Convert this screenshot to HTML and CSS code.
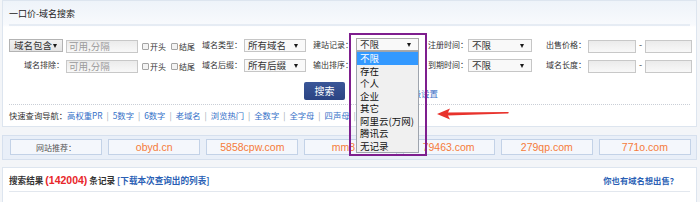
FILE: index.html
```html
<!DOCTYPE html>
<html lang="zh">
<head>
<meta charset="utf-8">
<title>一口价-域名搜索</title>
<link rel="stylesheet" href="styles.css">
</head>
<body>
<div class="page">
  <div class="panel search">
    <div class="ph">一口价-域名搜索</div>
    <div class="form">
      <div class="row">
        <div class="cellA"><span class="sel sel-first w54"><span>域名包含</span><i class="ar"></i></span></div>
        <span class="inp w72">可用,分隔</span>
        <span class="chk"><i class="cb"></i><span>开头</span></span>
        <span class="chk last"><i class="cb"></i><span>结尾</span></span>
        <span class="lbl w42">域名类型：</span>
        <span class="sel w62 mr7"><span>所有域名</span><i class="ar"></i></span>
        <span class="lbl w43">建站记录：</span>
        <span class="sel w63 mr9 open"><span>不限</span><i class="ar"></i></span>
        <span class="lbl w40">注册时间：</span>
        <span class="sel w64 mr14"><span>不限</span><i class="ar"></i></span>
        <span class="lbl w42">出售价格：</span>
        <span class="inp w48"></span>
        <span class="dash">-</span>
        <span class="inp w47"></span>
      </div>
      <div class="row">
        <div class="cellA"><span class="lbl right">域名排除：</span></div>
        <span class="inp w72">可用,分隔</span>
        <span class="chk"><i class="cb"></i><span>开头</span></span>
        <span class="chk last"><i class="cb"></i><span>结尾</span></span>
        <span class="lbl w42">域名后缀：</span>
        <span class="sel w62 mr7"><span>所有后缀</span><i class="ar"></i></span>
        <span class="lbl w43">输出排序：</span>
        <span class="sel w63 mr9"><span></span><i class="ar"></i></span>
        <span class="lbl w40">到期时间：</span>
        <span class="sel w64 mr14"><span>不限</span><i class="ar"></i></span>
        <span class="lbl w42">域名长度：</span>
        <span class="inp w48"></span>
        <span class="dash">-</span>
        <span class="inp w47"></span>
      </div>
      <div class="btnrow">
        <span class="btn">搜索</span>
        <a class="reset">高级设置</a>
      </div>
    </div>
    <div class="nav">
      <span class="navlabel">快速查询导航：</span><a>高权重PR</a><i>|</i><a>5数字</a><i>|</i><a>6数字</a><i>|</i><a>老域名</a><i>|</i><a>浏览热门</a><i>|</i><a>全数字</a><i>|</i><a>全字母</a><i>|</i><a>四声母</a><i>|</i>
    </div>
  </div>

  <div class="panel rec">
    <span class="box title">网站推荐：</span>
    <span class="box">obyd.cn</span>
    <span class="box">5858cpw.com</span>
    <span class="box">mm8.cn</span>
    <span class="box">79463.com</span>
    <span class="box">279qp.com</span>
    <span class="box">771o.com</span>
  </div>

  <div class="panel result">
    <div class="resrow">
      <span class="restext">搜索结果 <b class="num">(142004)</b> 条记录 <a class="dl">[下载本次查询出的列表]</a></span>
      <a class="sell">你也有域名想出售？</a>
    </div>
  </div>

  <div class="frame"></div>
  <ul class="dropdown">
    <li class="hl">不限</li>
    <li>存在</li>
    <li>个人</li>
    <li>企业</li>
    <li>其它</li>
    <li>阿里云(万网)</li>
    <li>腾讯云</li>
    <li>无记录</li>
  </ul>
  <svg class="arrow" width="74" height="14" viewBox="0 0 74 14">
    <polygon points="1,7 14,1.5 12,5.6 72,5 73,5.8 72,6.6 12,8.4 14,12.5" fill="#e8322c"/>
  </svg>
</div>
</body>
</html>
```

FILE: styles.css
```css
html, body {
  margin: 0;
  padding: 0;
  background: #f3f5f8;
}

.page {
  position: relative;
  width: 700px;
  height: 202px;
  overflow: hidden;
  box-sizing: border-box;
  padding: 0 3px 0 2px;
  font-family: "Noto Sans CJK SC", "Noto Sans", sans-serif;
  color: #333;
}

a { text-decoration: none; cursor: pointer; }

.panel {
  border: 1px solid #dde5ef;
  background: #fff;
}

/* ---------- search panel ---------- */
.search {
  padding: 0 4px 0 6px;
  background: linear-gradient(#eef3f9 0, #f8fafd 24px, #fff 26px, #fff 100%);
}

.ph {
  height: 20px;
  padding-top: 3px;
  line-height: 20px;
  font-size: 9px;
  color: #222;
  border-bottom: 2px solid #e6ecf4;
  margin-right: 2px;
}

.form {
  padding-top: 9px;
  border-bottom: 1px dotted #c9ced6;
  margin-right: 2px;
}

.row {
  display: flex;
  align-items: flex-start;
  height: 20px;
}

.cellA {
  width: 57px;
  flex: none;
}

.lbl {
  flex: none;
  display: block;
  font-size: 8px;
  line-height: 20px;
  color: #333;
  white-space: nowrap;
}
.lbl.right { text-align: right; padding-right: 2px; }

.w40 { width: 40px; }
.w42 { width: 42px; }
.w43 { width: 43px; }
.w47 { width: 47px; }
.w48 { width: 48px; }
.w54 { width: 54px; }
.w62 { width: 62px; }
.w63 { width: 63px; }
.w64 { width: 64px; }
.w72 { width: 72px; }
.mr7 { margin-right: 7px; }
.mr9 { margin-right: 9px; }
.mr14 { margin-right: 14px; }

.sel {
  flex: none;
  display: flex;
  align-items: center;
  justify-content: space-between;
  box-sizing: border-box;
  height: 13px;
  margin-top: 4px;
  padding: 0 7px 0 3px;
  border: 1px solid #c6c6c6;
  background: #f9f9f9;
  font-size: 9.5px;
  line-height: 11px;
  color: #333;
  white-space: nowrap;
}
.sel-first {
  padding: 0 5px 0 4px;
  border-color: #b3b3b3;
  background: linear-gradient(#f1f1f1, #e4e4e4);
}
.sel.open { border-color: #a9a9a9; margin-top: 3px; }

.ar {
  display: block;
  width: 0;
  height: 0;
  border-left: 2.5px solid transparent;
  border-right: 2.5px solid transparent;
  border-top: 4px solid #1a1a1a;
}

.inp {
  flex: none;
  display: block;
  box-sizing: border-box;
  height: 13px;
  margin-top: 5px;
  padding-left: 2px;
  border: 1px solid #c8c8c8;
  background: linear-gradient(#ebebeb, #f8f8f8);
  font-size: 9.5px;
  line-height: 11px;
  color: #9a9a9a;
  white-space: nowrap;
}
.search .row .inp.w72 { margin-right: 4px; }

.chk {
  flex: none;
  display: flex;
  align-items: center;
  height: 20px;
  font-size: 8px;
  color: #333;
  margin-right: 5px;
  margin-top: 1px;
}
.chk.last { margin-right: 7px; }
.cb {
  display: block;
  box-sizing: border-box;
  width: 7px;
  height: 7px;
  margin-right: 1px;
  border: 1px solid #a4a4a4;
  border-radius: 1px;
  background: #f3f3f3;
}

.dash {
  flex: none;
  width: 9px;
  text-align: center;
  font-size: 9px;
  line-height: 20px;
  color: #444;
}

.btnrow {
  display: flex;
  align-items: flex-start;
  height: 29px;
  padding-left: 295px;
}
.btn {
  margin-top: 7px;
  width: 41px;
  height: 18px;
  line-height: 18px;
  text-align: center;
  font-size: 10px;
  color: #fff;
  background: linear-gradient(#3a5698, #2b4483);
  border-radius: 2px;
}
.reset {
  margin-top: 12px;
  margin-left: 59px;
  font-size: 8.5px;
  line-height: 12px;
  color: #3a70c6;
}

.nav {
  height: 21px;
  line-height: 21px;
  font-size: 8.3px;
  white-space: nowrap;
}
.navlabel { color: #333; }
.nav a { color: #3470c8; }
.nav i {
  font-style: normal;
  color: #9aa3b0;
  margin: 0 4px;
}

/* ---------- recommend ---------- */
.rec {
  margin-top: 8px;
  display: flex;
  gap: 6px;
  padding: 3px 5px 4px 7px;
  background: #e9eff8;
  border-color: #d6e0ee;
}
.box {
  flex: 1;
  height: 16px;
  box-sizing: border-box;
  border: 1px solid #c3d2e7;
  background: #f4f7fc;
  display: flex;
  align-items: center;
  justify-content: center;
  font-family: "Liberation Sans", Arial, sans-serif;
  font-size: 10.5px;
  color: #f47b3a;
  white-space: nowrap;
  overflow: hidden;
}
.box.title {
  font-family: "Noto Sans CJK SC", sans-serif;
  font-size: 8px;
  color: #555;
}

/* ---------- result ---------- */
.result {
  margin-top: 7px;
  height: 40px;
  padding: 0 4px 0 6px;
}
.resrow {
  display: flex;
  justify-content: space-between;
  align-items: center;
  height: 23px;
  border-bottom: 1px solid #e2e7ee;
  margin-right: 2px;
  font-size: 8.6px;
  font-weight: bold;
  white-space: nowrap;
}
.restext { color: #333; }
.num {
  font-family: "Liberation Sans", Arial, sans-serif;
  font-size: 10.5px;
  color: #e8262a;
}
.dl { color: #2a5fb5; }
.sell { color: #2a5fb5; margin-right: 12px; font-size: 8.3px; }

/* ---------- overlays ---------- */
.frame {
  position: absolute;
  left: 349px;
  top: 33px;
  width: 78px;
  height: 123px;
  box-sizing: border-box;
  border: 2px solid #7e1e8e;
}

.dropdown {
  position: absolute;
  left: 356px;
  top: 51px;
  width: 63px;
  height: 102px;
  box-sizing: border-box;
  margin: 0;
  padding: 0;
  list-style: none;
  border: 1px solid #9ea4ad;
  background: #f0f0f0;
}
.dropdown li {
  height: 12.5px;
  line-height: 12.5px;
  padding-left: 3px;
  font-size: 9.5px;
  color: #111;
  white-space: nowrap;
}
.dropdown li.hl {
  background: #3399ff;
  color: #fff;
}

.arrow {
  position: absolute;
  left: 436px;
  top: 107px;
}
```
